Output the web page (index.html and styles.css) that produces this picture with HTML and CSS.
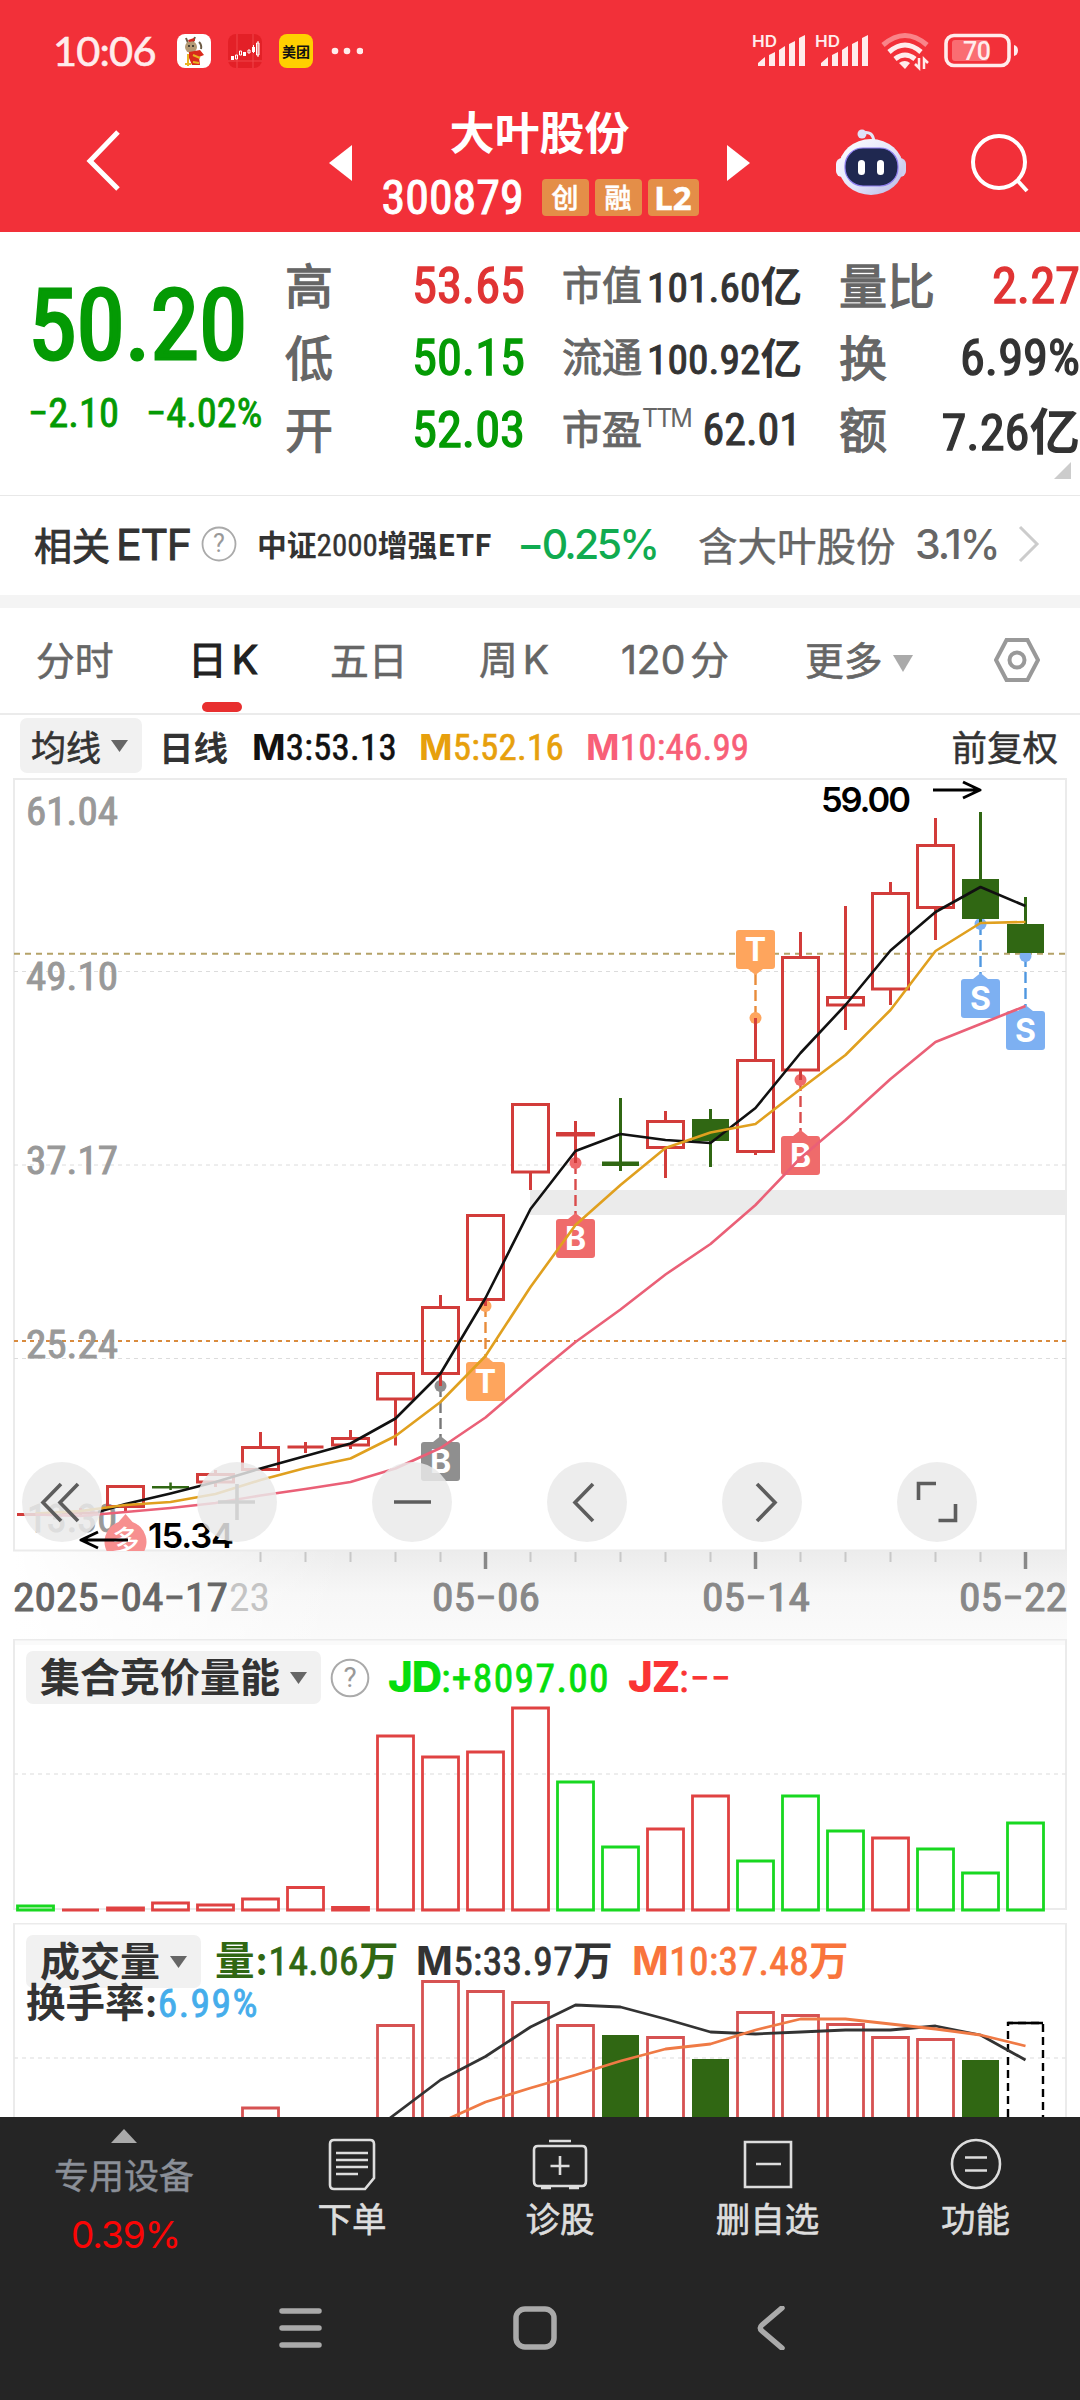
FILE: index.html
```html
<!DOCTYPE html>
<html lang="zh-CN">
<head>
<meta charset="utf-8">
<title>大叶股份 300879</title>
<link rel="stylesheet" href="styles.css">
</head>
<body>
<header class="top">
  <div class="status">
    <span class="clock">10:06</span>
    <svg class="app" viewBox="0 0 34 34"><rect width="34" height="34" rx="8" fill="#fff"/><path d="M9 4l2 5M18 3l-2 5M22 8q3 3 2 7" stroke="#6b5a44" stroke-width="2" fill="none"/><ellipse cx="14" cy="13" rx="6" ry="6" fill="#b49a74"/><path d="M11 6l6-2 1 3-6 1z" fill="#d2281e"/><path d="M12 18l11-2 4 5-5 2 1 8h-8l-3-7z" fill="#d92a1c"/><path d="M11 20v12M8 30h6M16 21l7 3M16 28l6 1" stroke="#e8b422" stroke-width="2"/><circle cx="12" cy="12" r="1" fill="#222"/><circle cx="16" cy="12" r="1" fill="#222"/></svg>
    <svg class="app" viewBox="0 0 34 34"><rect width="34" height="34" rx="8" fill="#e32027"/><path d="M9 0v34M25 0v34M0 27h34" stroke="#f0454a" stroke-width="1"/><path d="M3 22h3v4H3zM15 18h3v4h-3zM24 13h3v5h-3z" fill="#fff"/><path d="M7.500 21h2v4h-2zM11.500 17h2v4h-2zM20 16h2v3h-2zM28.500 9h2.500v12h-2.500zM25.500 11v8M30 7v16" stroke="#fff" fill="none"/></svg>
    <span class="meituan">美团</span>
    <svg class="dots" viewBox="0 0 32 8"><circle cx="4" cy="4" r="3.300"/><circle cx="16" cy="4" r="3.300"/><circle cx="29" cy="4" r="3.300"/></svg>
    <svg class="signals" viewBox="0 0 270 40">
      <g id="sig"><text x="0" y="14" class="hd" textLength="25" lengthAdjust="spacingAndGlyphs">HD</text><path d="M6 33v-3l7-6v9zM17 33V22l6-3v14zM27 33V17l6-4v20zM37 33V11l6-3v25zM47 33V5l6-3v31z"/></g>
      <use href="#sig" x="63"/>
      <g fill="none" stroke-width="5"><path d="M131 12q22-19 44 0" class="weak"/><path d="M137 19q16-14 32 0M143 26q10-8 20 0" /></g><path d="M147 30q6-4 11 0l-5 6z"/><path d="M167 25v10l-4-4M172 36V26l4 4" fill="none" stroke-width="2.500"/>
      <rect x="194" y="2.500" width="63" height="30" rx="8" fill="none" stroke-width="3.600"/><rect x="200" y="7" width="36" height="21" rx="3" class="level"/><path d="M262 12q4 1 4 5.500t-4 5.500z"/><text class="batt" x="211" y="27" textLength="28">70</text>
    </svg>
  </div>
  <div class="title">
    <svg class="back" viewBox="0 0 40 66"><path d="M33 4L5 33l28 28"/></svg>
    <svg class="prev" viewBox="0 0 23 36"><path d="M23 0v36L0 18z"/></svg>
    <div class="name">
      <h1>大叶股份</h1>
      <div class="code"><span class="n">300879</span><i>创</i><i>融</i><i class="l2">L2</i></div>
    </div>
    <svg class="next" viewBox="0 0 23 36"><path d="M0 0v36l23-18z"/></svg>
    <svg class="robot" viewBox="0 0 70 66">
      <defs><linearGradient id="rb" x1="0" y1="0" x2="1" y2="1"><stop offset="0" stop-color="#fff"/><stop offset=".55" stop-color="#e3e4fa"/><stop offset="1" stop-color="#b3b5e4"/></linearGradient></defs>
      <path d="M26 4q11-3 12 9" fill="none" stroke="#e4e5f8" stroke-width="3"/><circle cx="26" cy="5" r="4.500" fill="#dfe1f8"/>
      <rect x="0" y="29" width="12" height="19" rx="6" fill="#f2f2ff"/><rect x="58" y="29" width="12" height="19" rx="6" fill="#cfd0f0"/>
      <ellipse cx="35" cy="38" rx="32" ry="28" fill="url(#rb)"/><rect x="9" y="19" width="53" height="38" rx="18" fill="#1f2850" stroke="#8f7ff0" stroke-width="1.200"/><rect x="22" y="31" width="7" height="15" rx="3.500" fill="#fff"/><rect x="41" y="31" width="7" height="15" rx="3.500" fill="#fff"/>
    </svg>
    <svg class="search" viewBox="0 0 60 62"><circle cx="29" cy="29" r="26"/><path d="M47 47l10 11"/></svg>
  </div>
</header>

<section class="quote">
  <div class="last"><b class="n">50.20</b><div class="chg n"><span>−2.10</span><span>−4.02%</span></div></div>
  <dl class="col big"><dt>高</dt><dd class="n up">53.65</dd><dt>低</dt><dd class="n down">50.15</dd><dt>开</dt><dd class="n down">52.03</dd></dl>
  <dl class="col mid"><dt>市值</dt><dd class="n">101.60<em>亿</em></dd><dt>流通</dt><dd class="n">100.92<em>亿</em></dd><dt>市盈<sup>TTM</sup></dt><dd class="n pe">62.01</dd></dl>
  <dl class="col big"><dt>量比</dt><dd class="n up">2.27</dd><dt>换</dt><dd class="n">6.99%</dd><dt>额</dt><dd class="n">7.26<em>亿</em></dd></dl>
  <svg class="corner" viewBox="0 0 17 17"><path d="M17 0v17H0z"/></svg>
</section>

<section class="etf">
  <span class="etf-t">相关<span class="lat">ETF</span></span>
  <svg class="q" viewBox="0 0 36 36"><circle cx="18" cy="18" r="16.500"/><text x="18" y="26" text-anchor="middle">?</text></svg>
  <b class="etf-n">中证<span class="n">2000</span>增强ETF</b>
  <span class="etf-p">−0.25%</span>
  <span class="etf-h">含大叶股份</span><span class="etf-r">3.1%</span>
  <svg class="chev" viewBox="0 0 22 38"><path d="M2 2l17 17L2 36"/></svg>
</section>

<nav class="tabs">
  <span>分时</span><span class="on">日<i>K</i></span><span>五日</span><span>周<i>K</i></span><span><i>120</i>分</span><span>更多<svg viewBox="0 0 20 17"><path d="M0 0h20l-10 17z"/></svg></span>
  <svg class="gear" viewBox="0 0 46 46"><path d="M12.500 3h21L44 23 33.500 43h-21L2 23z"/><circle cx="23" cy="23" r="7.500"/></svg>
</nav>

<section class="ma">
  <span class="pill">均线<svg viewBox="0 0 17 12"><path d="M0 0h17L8.500 12z"/></svg></span>
  <b class="dayline">日线</b>
  <span class="n m3"><b>M</b>3:53.13</span><span class="n m5"><b>M</b>5:52.16</span><span class="n m10"><b>M</b>10:46.99</span>
  <span class="fq">前复权</span>
</section>

<svg class="kline" viewBox="0 778 1080 861">
  <defs>
    <linearGradient id="ax" x1="0" y1="0" x2="0" y2="1"><stop offset="0" stop-color="#ececec"/><stop offset=".5" stop-color="#f7f7f7"/><stop offset="1" stop-color="#fafafa"/></linearGradient>
    <linearGradient id="fade" x1="0" y1="0" x2="1" y2="0"><stop offset="0" stop-color="#fff"/><stop offset="1" stop-color="#fff" stop-opacity="0"/></linearGradient>
    <clipPath id="plot"><rect x="14" y="779" width="1053" height="772"/></clipPath>
  </defs>
  <rect x="14" y="1551" width="1053" height="88" fill="url(#ax)"/><rect x="14" y="1551" width="330" height="88" fill="url(#fade)"/>
  <rect x="530" y="1190" width="537" height="25" fill="#ebebeb"/>
  <rect x="14" y="779" width="1052" height="771.500" fill="none" stroke="#ebebeb" stroke-width="2"/>
  <path d="M14 971.500h1052M14 1165h1052M14 1358.500h1052" stroke="#dcdcdc" stroke-dasharray="4 4" fill="none"/>
  <path d="M14 953.700h1052" stroke="#b5a268" stroke-width="2" stroke-dasharray="6 5"/>
  <path d="M14 1341h1052" stroke="#d98b3e" stroke-width="2" stroke-dasharray="4 4"/>
  <g class="ylab">
    <text x="26" y="825" textLength="92" lengthAdjust="spacingAndGlyphs">61.04</text><text x="26" y="990" textLength="92" lengthAdjust="spacingAndGlyphs">49.10</text><text x="26" y="1174" textLength="92" lengthAdjust="spacingAndGlyphs">37.17</text><text x="26" y="1358" textLength="92" lengthAdjust="spacingAndGlyphs">25.24</text><text x="27" y="1532" textLength="90" lengthAdjust="spacingAndGlyphs">13.30</text>
  </g>
  <g clip-path="url(#plot)"><path d="M125.500 1514l7 8a21 21 0 1 1-14 0z" fill="#f78f8f"/><text class="duo" x="125.500" y="1551" text-anchor="middle">多</text></g>
  <g class="marks">
    <g stroke-dasharray="11 5" stroke-width="2.400"><path d="M440.500 1386v52" stroke="#777"/><path d="M485.500 1306v52" stroke="#e88c3a"/><path d="M755.500 1017v-46" stroke="#e88c3a"/><path d="M575.500 1163v52M800.500 1080v52" stroke="#d94b4b"/><path d="M980.500 924v50M1025.500 956v50" stroke="#4f97e0"/></g>
    <g fill="#8f8f8f"><circle cx="440.500" cy="1386" r="6"/><path d="M424 1442h9l7.500-6 7.500 6h9q3 0 3 3v33q0 3-3 3h-33q-3 0-3-3v-33q0-3 3-3z"/></g>
    <g fill="#fea55d"><circle cx="485.500" cy="1306" r="6"/><path d="M469 1362h9l7.500-6 7.500 6h9q3 0 3 3v33q0 3-3 3h-33q-3 0-3-3v-33q0-3 3-3z"/><circle cx="755.500" cy="1018" r="6"/><path d="M739 930h33q3 0 3 3v33q0 3-3 3h-9l-7.500 6-7.500-6h-9q-3 0-3-3v-33q0-3 3-3z"/></g>
    <g fill="#ef6b6b"><circle cx="575.500" cy="1163" r="6"/><path d="M559 1219h9l7.500-6 7.500 6h9q3 0 3 3v33q0 3-3 3h-33q-3 0-3-3v-33q0-3 3-3z"/><circle cx="800.500" cy="1080" r="6"/><path d="M784 1136h9l7.500-6 7.500 6h9q3 0 3 3v33q0 3-3 3h-33q-3 0-3-3v-33q0-3 3-3z"/></g>
    <g fill="#7db0f2"><circle cx="980.500" cy="924" r="6"/><path d="M964 979h9l7.500-6 7.500 6h9q3 0 3 3v33q0 3-3 3h-33q-3 0-3-3v-33q0-3 3-3z"/><circle cx="1025.500" cy="956" r="6"/><path d="M1009 1011h9l7.500-6 7.500 6h9q3 0 3 3v33q0 3-3 3h-33q-3 0-3-3v-33q0-3 3-3z"/></g>
    <g class="tag"><text x="440.500" y="1473">B</text><text x="485.500" y="1393">T</text><text x="755.500" y="961">T</text><text x="575.500" y="1250">B</text><text x="800.500" y="1167">B</text><text x="980.500" y="1010">S</text><text x="1025.500" y="1042">S</text></g>
  </g>
  <path class="red" d="M17 1514.500h37M62 1513h37M80.500 1508v7M287.500 1447h36M556 1133.500h39M556 1135h39M305.500 1442v11M575.500 1121v42M125.500 1485v1M125.500 1507v5M215.500 1470v4M215.500 1482v5M260.500 1432v15M350.500 1430v8M350.500 1445v4M395.500 1399v46.500M440.500 1295v12M440.500 1374v12M485.500 1300v6M530.500 1172v18M665.500 1111v10M665.500 1148v30M755.500 1018v42M755.500 1152v3M800.500 932v25M800.500 1070v10M845.500 906v91M845.500 1005v25M890.500 882v11M890.500 989v16M935.500 818v27M935.500 908v32"/>
  <path class="red" d="M107.500 1486.500h36v20h-36zM197.500 1474.500h36v7.500h-36zM242.500 1447.500h36v22h-36zM332.500 1438.500h36v6.500h-36zM377.500 1373.500h36v25.500h-36zM422.500 1307.500h36v66h-36zM467.500 1215.500h36v84h-36zM512.500 1104.500h36v67.500h-36zM647.500 1121.500h36v26h-36zM737.500 1060.500h36v91h-36zM782.500 957.500h36v112.500h-36zM827.500 997.500h36v7.500h-36zM872.500 893.500h36v95.500h-36zM917.500 845.500h36v62h-36z"/>
  <path d="M152 1486h37v2.500h-37zM602 1161.500h37v4.500h-37zM692 1119h37v22h-37zM962 879h37v40h-37zM1007 924h37v29h-37zM169.300 1482.500h2.500v7.500h-2.500zM619 1098h3v73h-3zM709 1109h3v58h-3zM979 812h3v112h-3zM1024 897h3v30h-3z" fill="#306713"/>
  <g fill="none" stroke-width="2.600" stroke-linejoin="round">
    <path stroke="#111" d="M98 1512L125.500 1504 170.500 1493.500 215.500 1482 260.500 1468.500 305.500 1456 350.500 1443.500 395.500 1418.500 440.500 1373.500 485.500 1298 530.500 1209 575.500 1151 620.500 1134 665.500 1140 710.500 1143 755.500 1108 800.500 1053 845.500 1005 890.500 950.500 935.500 912 980.500 887 1025.500 906"/>
    <path stroke="#e0a01f" d="M35.500 1513.500L80.500 1511 125.500 1505 170.500 1502 215.500 1494 260.500 1480 305.500 1468 350.500 1458.500 395.500 1436 440.500 1402 485.500 1356 530.500 1287 575.500 1225 620.500 1185 665.500 1148 710.500 1132.500 755.500 1124 800.500 1089 845.500 1055 890.500 1010 935.500 951 980.500 923 1025.500 922"/>
    <path stroke="#ea6077" d="M35.500 1514.500L80.500 1516 125.500 1512 170.500 1508 215.500 1503 260.500 1495.500 305.500 1489 350.500 1482 395.500 1468.500 440.500 1448 485.500 1417.500 530.500 1379 575.500 1342 620.500 1309.500 665.500 1274.500 710.500 1244 755.500 1205 800.500 1158 845.500 1120 890.500 1079 935.500 1042 980.500 1024 1025.500 1006"/>
    <path stroke="#000" stroke-width="3" d="M933 790h47M963 782l17 8-17 8M128 1540H81M98 1532l-17 8 17 8"/>
  </g>
  <g class="hl"><text x="821" y="812" textLength="90">59.00</text><text x="148" y="1548" textLength="86">15.34</text></g>
  <g fill="#e9e9e9" fill-opacity=".84"><circle cx="62" cy="1502" r="40"/><circle cx="237" cy="1502" r="40"/><circle cx="412" cy="1502" r="40"/><circle cx="587" cy="1502" r="40"/><circle cx="762" cy="1502" r="40"/><circle cx="937" cy="1502" r="40"/></g>
  <g fill="none" stroke="#5d5d5d" stroke-width="3.600"><path d="M61 1484l-18 18.500 18 18.500M78 1484l-18 18.500 18 18.500M394 1502h37M593 1484l-18 18.500 18 18.500M757 1484l18 18.500-18 18.500M918.500 1500v-16.500H936M955.500 1504v16.500H938.500"/><path stroke="#d2d2d2" d="M218 1502h37M237 1484v36"/></g>
  <path d="M260.500 1552v10M305.500 1552v10M350.500 1552v10M395.500 1552v10M440.500 1552v10M530.500 1552v10M575.500 1552v10M620.500 1552v10M665.500 1552v10M710.500 1552v10M800.500 1552v10M845.500 1552v10M890.500 1552v10M935.500 1552v10M980.500 1552v10" stroke="#c8c8c8" stroke-width="2"/>
  <path d="M485.500 1552v17M755.500 1552v17M1025.500 1552v17" stroke="#888" stroke-width="3.500"/>
  <g class="dates"><text class="first" x="13" y="1611" textLength="215" lengthAdjust="spacingAndGlyphs">2025−04−17</text><text class="faded" x="229" y="1611" textLength="41" lengthAdjust="spacingAndGlyphs">23</text><text x="432" y="1611" textLength="108" lengthAdjust="spacingAndGlyphs">05−06</text><text x="702" y="1611" textLength="108" lengthAdjust="spacingAndGlyphs">05−14</text><text x="959" y="1611" textLength="108" lengthAdjust="spacingAndGlyphs">05−22</text></g>
</svg>

<section class="panel auction">
  <svg class="plot" viewBox="0 1639 1080 284">
    <rect x="14" y="1639" width="1052" height="6" fill="#fafafa"/>
    <rect x="14" y="1639.500" width="1052" height="269.500" fill="none" stroke="#ebebeb" stroke-width="2"/><path d="M14 1774h1052" stroke="#e8e8e8" stroke-width="1.500" stroke-dasharray="4 4"/>
    <path class="vr" d="M62 1910h37M107.500 1908h36v2h-36zM152.500 1903h36v7h-36zM197.500 1905h36v5h-36zM242.500 1899h36v11h-36zM287.500 1887.500h36v22.500h-36zM332.500 1907.500h36v2.500h-36zM377.500 1736h36v174h-36zM422.500 1757h36v153h-36zM467.500 1752h36v158h-36zM512.500 1708h36v202h-36zM647.500 1829h36v81h-36zM692.500 1796h36v114h-36zM872.500 1838h36v72h-36z"/>
    <path class="vg" d="M17.500 1906h36v4h-36zM557.500 1782h36v128h-36zM602.500 1847h36v63h-36zM737.500 1861h36v49h-36zM782.500 1796h36v114h-36zM827.500 1831h36v79h-36zM917.500 1849h36v61h-36zM962.500 1873h36v37h-36zM1007.500 1823h36v87h-36z"/>
  </svg>
  <div class="head"><b class="pill">集合竞价量能<svg viewBox="0 0 17 12"><path d="M0 0h17L8.500 12z"/></svg></b>
    <svg class="q" viewBox="0 0 36 36"><circle cx="18" cy="18" r="16.500"/><text x="18" y="26" text-anchor="middle">?</text></svg>
    <span class="n jd"><b>JD</b>:+8097.00</span><span class="n jz"><b>JZ</b>:−−</span></div>
</section>

<section class="panel volume">
  <svg class="plot" viewBox="0 1923 1080 194">
    <path d="M14 2117V1923.500h1052V2117" fill="none" stroke="#ebebeb" stroke-width="2"/><path d="M14 2058h1052" stroke="#e8e8e8" stroke-width="1.500" stroke-dasharray="4 4"/>
    <path class="vv" d="M242.500 2108h36v30h-36zM377.500 2025.500h36v120h-36zM422.500 1981.500h36v160h-36zM467.500 1991.500h36v160h-36zM512.500 2002.500h36v160h-36zM557.500 2025.500h36v120h-36zM647.500 2037.500h36v120h-36zM737.500 2012.500h36v120h-36zM782.500 2015.500h36v120h-36zM827.500 2024.500h36v120h-36zM872.500 2037.500h36v120h-36zM917.500 2039.500h36v120h-36z"/>
    <path fill="#306713" d="M602 2035h37v82h-37zM692 2059h37v58h-37zM962 2060h37v57h-37z"/>
    <path d="M1008 2117v-94h35v94" fill="none" stroke="#000" stroke-width="2.400" stroke-dasharray="8 5"/><path d="M1008 2023h35" stroke="#000" stroke-width="2.400"/>
    <g fill="none" stroke-width="2.800" stroke-linejoin="round"><path stroke="#333" d="M390 2118L440.500 2080 485.500 2056.500 530.500 2027 575.500 2005 620.500 2007 665.500 2019 710.500 2032 755.500 2034 800.500 2032 845.500 2030 890.500 2030 935.500 2026 980.500 2035 1025.500 2060"/><path stroke="#ef7a45" d="M450 2118L485.500 2102 530.500 2088 575.500 2075 620.500 2061 665.500 2049 710.500 2044 755.500 2030 800.500 2019 845.500 2019 890.500 2024 935.500 2029 980.500 2035 1025.500 2046"/></g>
  </svg>
  <div class="head"><b class="pill">成交量<svg viewBox="0 0 17 12"><path d="M0 0h17L8.500 12z"/></svg></b>
    <span class="n v1"><b>量:</b>14.06<b>万</b></span><span class="n v2"><b>M</b>5:33.97<b>万</b></span><span class="n v3"><b>M</b>10:37.48<b>万</b></span>
    <div class="turn"><b>换手率:</b><span class="n">6.99%</span></div></div>
</section>

<footer>
  <div class="bar">
    <div class="sector"><svg viewBox="0 0 26 14"><path d="M13 0l13 14H0z"/></svg><span>专用设备</span><em>0.39%</em></div>
    <div class="act a1"><svg viewBox="0 0 54 54"><path d="M9 3h36q4 0 4 4v34l-9 11H9q-4 0-4-4V7q0-4 4-4zM11 16h32M11 23h32M11 30h32M11 37h22"/></svg><span>下单</span></div>
    <div class="act a2"><svg viewBox="0 0 58 54"><path d="M18 4h22M7 9h44q4 0 4 4v31q0 5-4 5H7q-4 0-4-5V13q0-4 4-4zM29 19v19M19.500 29h19M10 51h10M38 51h10"/></svg><span>诊股</span></div>
    <div class="act a3"><svg viewBox="0 0 54 54"><path d="M4 5h46v45H4zM15 27h25"/></svg><span>删自选</span></div>
    <div class="act a4"><svg viewBox="0 0 54 54"><circle cx="27" cy="27" r="24"/><path d="M16 20.500h22M16 33.500h22"/></svg><span>功能</span></div>
  </div>
  <div class="sys">
    <svg viewBox="0 0 44 44"><path d="M4 5h37M4 22h37M4 39h37"/></svg>
    <svg viewBox="0 0 44 44"><rect x="3" y="3" width="38" height="38" rx="9"/></svg>
    <svg viewBox="0 0 44 44"><path d="M34 2L14 19q-3.500 3 0 6l20 17"/></svg>
  </div>
</footer>
</body>
</html>
```
FILE: styles.css
```css
*{box-sizing:border-box}
body{margin:0;width:1080px;height:2400px;overflow:hidden;background:#fff;color:#333;font-family:Roboto,"Noto Sans CJK SC",sans-serif;display:flex;flex-direction:column;line-height:1;white-space:nowrap}
svg{display:block;flex:none}
i,em{font-style:normal}
.n{font-family:Roboto,"Noto Sans CJK SC",sans-serif;font-stretch:85%;-webkit-text-stroke:.8px}
.n b,.n em{-webkit-text-stroke:0}
.up{color:#e03434!important}.down{color:#049a04!important}

.top{height:232px;background:#f23039;color:#fff;flex:none}
.status{height:104px;padding:0 50px 3px 53px;display:flex;align-items:center}
.clock{font-family:Lato,sans-serif;font-size:41.500px;-webkit-text-stroke:.6px;letter-spacing:-.8px;width:124px;color:#ffecec}
.app{width:34px;height:34px;margin-right:17px}
.meituan{width:34px;height:34px;border-radius:8px;background:#ffd000;color:#111;font:700 14px/34px "Noto Sans CJK SC",sans-serif;text-align:center;margin-right:18px}
.dots{width:32px;height:8px;fill:#ffecec}
.signals{width:270px;height:40px;margin-left:auto;margin-right:8px;margin-top:5px;fill:#ffecec;overflow:visible}
.signals g[fill],.signals path[fill],.signals rect{stroke:#ffecec}
.signals .weak{stroke:#f98489}
.signals .level{fill:#fa6d72;stroke:none}
.hd{font:600 16px Inter,sans-serif}
.batt{font:500 25px Roboto,sans-serif}
.title{height:128px;display:flex;align-items:flex-start;padding:0 0 0 85px}
.back{width:40px;height:66px;margin-top:24px;fill:none;stroke:#fff;stroke-width:5}
.prev,.next{width:23px;height:36px;fill:#fff;margin-top:41px}
.prev{margin-left:204px}
.name{width:375px;display:flex;flex-direction:column;align-items:center}
h1{margin:3px 0 0;font:700 45px/48px "Noto Sans CJK SC",sans-serif}
.code{display:flex;align-items:center;height:42px;margin-top:21px;margin-left:1px}
.code .n{font-size:48px;width:160px;margin-top:2px;-webkit-text-stroke:1px}
.code i{background:#e48e48;width:47px;height:37px;border-radius:4px;margin-right:6px;font:500 27px/36px "Noto Sans CJK SC",sans-serif;-webkit-text-stroke:.5px;text-align:center}
.code .l2{width:51px;font:700 33px/37px "Noto Sans",sans-serif;margin:0}
.robot{width:70px;height:66px;margin:25px 0 0 86px}
.search{width:60px;height:62px;margin:29px 0 0 64px;fill:none;stroke:#fff;stroke-width:4}

.quote{height:263px;display:grid;grid-template-columns:285px 277px 277px 241px;position:relative;padding-top:18px;flex:none}
.last{padding-left:28px;color:#049a04}
.last b{display:block;font-weight:400;-webkit-text-stroke:3px;font-size:98px;line-height:98px;margin-top:27px}
.chg{display:flex;gap:27px;font-size:40.500px;margin-top:18px}
.col{margin:0;display:grid;grid-template-columns:auto 1fr;grid-auto-rows:72px;align-items:center;height:216px}
.col:not(:nth-child(4)){padding-right:37px}
.col dt{color:#666;font:400 48px/66px "Noto Sans CJK SC",sans-serif;-webkit-text-stroke:1.300px;height:72px}
.col dd{margin:0;font-size:50.500px;-webkit-text-stroke:1.300px;line-height:74px;text-align:right}
.mid dt{font-size:40px;width:80px;-webkit-text-stroke:1px}.mid dd{font-size:41.500px;font-stretch:78%;-webkit-text-stroke:1px}
.mid .pe{font-size:44px;font-stretch:80%;padding-right:1px}
.col em{font-family:"Noto Sans CJK SC",sans-serif;font-weight:700}
sup{font:400 25px/20px Inter,sans-serif;vertical-align:17px;letter-spacing:-2px;-webkit-text-stroke:0}
.corner{position:absolute;right:9px;bottom:16px;width:17px;height:17px;fill:#ccc}

.etf{height:100px;border-top:1px solid #e8e8e8;display:flex;align-items:center;padding:0 0 3px 34px;flex:none}
.etf-t{font:400 38px/50px "Noto Sans CJK SC",sans-serif;width:167px;-webkit-text-stroke:.9px}
.lat{font:400 43px/50px Inter,sans-serif;margin-left:6px;letter-spacing:-1.400px}
.q{width:36px;height:36px;fill:none;stroke:#aaa;stroke-width:1.800}
.q text{font:400 25px Roboto,sans-serif;fill:#999;stroke:none}
.etf-n{margin-left:20px;width:260px;font:700 29.800px/50px "Noto Sans CJK SC",sans-serif}
.etf-n .n{font-weight:400;font-size:31px;font-stretch:84%;-webkit-text-stroke:.4px}
.etf-p{color:#10ab50;font:500 41px/50px "Inter",sans-serif;letter-spacing:-2.700px;width:181px}
.etf-h{color:#666;font:400 39.500px/50px "Noto Sans CJK SC",sans-serif;-webkit-text-stroke:.4px;width:217px}
.etf-r{color:#666;font:500 41px/50px Inter,sans-serif;letter-spacing:-2px;width:103px}
.chev{width:22px;height:38px;fill:none;stroke:#ccc;stroke-width:3}

.tabs{height:120px;border-top:13px solid #f4f4f4;border-bottom:2px solid #ebebeb;display:grid;grid-template-columns:152px 142px 149px 142px 184px 224px 1fr;padding:0 0 5px 36px;align-items:center;color:#666;font:400 38.800px/50px "Noto Sans CJK SC",sans-serif;-webkit-text-stroke:.6px;flex:none}
.tabs i{font-family:Inter,sans-serif;font-size:39px;margin:0 2px 0 5px}
.tabs>span:nth-child(5) i{margin-left:0;margin-right:5px}
.tabs .on{color:#222;-webkit-text-stroke:1.200px;position:relative}
.on::after{content:"";position:absolute;left:14px;top:70px;width:40px;height:10px;border-radius:5px;background:#e82f2f}
.tabs span svg{display:inline-block;width:20px;height:17px;fill:#aaa;margin-left:10px;vertical-align:3px}
.gear{width:46px;height:46px;fill:none;stroke:#999;stroke-width:4;margin-left:-35px;margin-top:3px}

.ma{height:63px;display:flex;align-items:center;padding:0 22px 2px 20px;flex:none;font-size:37px}
.pill{background:#f1f1f1;border-radius:7px;display:flex;align-items:center;font-family:"Noto Sans CJK SC",sans-serif}
.pill svg{width:17px;height:12px;fill:#666}
.ma .pill{width:122px;height:55px;font-size:35px;-webkit-text-stroke:.6px;padding-left:11px;gap:10px}
.dayline{font:700 34.500px/50px "Noto Sans CJK SC",sans-serif;margin-left:17px;width:93px}
.ma .n b{font-family:Inter,sans-serif;font-size:36px}
.ma .n{letter-spacing:.2px;padding-top:3px;-webkit-text-stroke:.6px}
.ma .n b{-webkit-text-stroke:0}
.m3{color:#111;width:167px}.m5{color:#e7a00c;width:167px}.m10{color:#f85f78}
.fq{margin-left:auto;font:400 35.500px/50px "Noto Sans CJK SC",sans-serif;-webkit-text-stroke:.5px}

.kline{width:1080px;height:861px}
.ylab text,.dates text{font:400 39px Roboto,sans-serif;font-stretch:85%;stroke-width:.9px}
.ylab{fill:#999;stroke:#999}.dates{fill:#888;stroke:#888}
.dates .first{fill:#666;stroke:#666}.dates .faded{fill:#c4c4c4;stroke:none}
.duo{font:500 28px "Noto Sans CJK SC",sans-serif;fill:#fff}
.hl text{font:600 34.500px Inter,sans-serif;fill:#000}
.tag text{font:700 32px Inter,sans-serif;fill:#fff;text-anchor:middle}
.red{fill:none;stroke:#d23c3a;stroke-width:3}

.panel{display:grid;flex:none}
.panel>*{grid-area:1/1}
.auction{height:284px}.volume{height:194px}
.plot{width:1080px}
.vr,.vg{fill:none;stroke:#e04242;stroke-width:2.800}.vg{stroke:#18d820}
.vv{fill:none;stroke:#d65252;stroke-width:2.800}
.head{display:flex;flex-wrap:wrap;align-content:flex-start;align-items:center;padding:12px 0 0 26px;font-size:39.500px}
.head .pill{height:53px;padding:0 14px 0 14px;gap:10px;font-size:40px;font-weight:700}
.head .q{width:40px;height:40px;margin:0 18px 0 9px}
.head b{font-family:Inter,"Noto Sans CJK SC",sans-serif}
.head>.n,.turn .n{letter-spacing:.4px}
.jd{color:#06dd0d;width:240px}.jz{color:#fa3434}
.head .jd,.head .jz{letter-spacing:1.400px}
.jd b,.jz b{font-size:42px;font-weight:800;letter-spacing:-1px}
.volume .pill+.n{margin-left:14px}
.v1{color:#306713;width:201px}.v2{width:216px}.v3{color:#f9743c}
.turn{width:100%;font-size:39.500px;line-height:30px}
.head .turn .n{color:#45adeb;letter-spacing:1.500px}

footer{height:283px;background:#252525;flex:none}
.bar{height:158px;display:grid;grid-template-columns:248px 208px 208px 207px 209px;color:#ddd}
.sector{display:flex;flex-direction:column;align-items:center;padding-top:12px}
.sector svg{width:26px;height:14px;fill:#aaa}
.sector span{font:400 35px/40px "Noto Sans CJK SC",sans-serif;color:#8b9099;margin-top:11px;-webkit-text-stroke:.4px}
.sector em{font:400 37px/40px Inter,sans-serif;letter-spacing:-1px;color:#fb0505;margin-top:21px;padding-left:3px}
.act{display:flex;flex-direction:column;align-items:center}
.act svg{width:54px;height:54px;margin-top:20px;fill:none;stroke:#ddd;stroke-width:2.600}
.act.a2 svg{width:58px}
.act span{font:400 34.500px/40px "Noto Sans CJK SC",sans-serif;-webkit-text-stroke:.6px;margin-top:6px}
.sys{display:flex;padding:31px 0 0 278px;gap:191px}
.sys svg{width:44px;height:44px;fill:none;stroke:#aaa;stroke-width:5.500;stroke-linecap:round}
```
